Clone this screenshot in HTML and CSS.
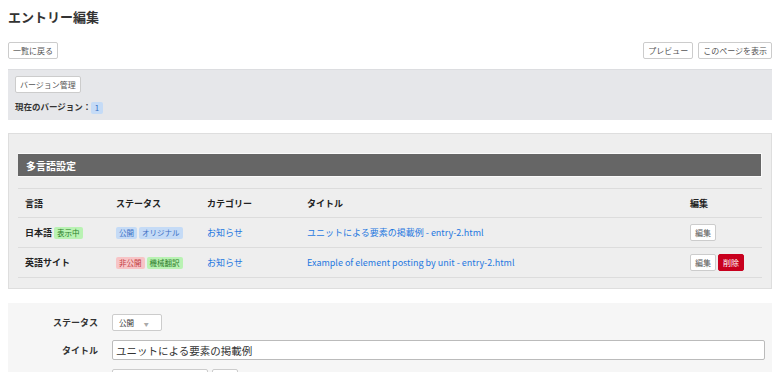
FILE: index.html
```html
<!DOCTYPE html>
<html lang="ja">
<head>
  <meta charset="UTF-8">
  <meta name="viewport" content="width=device-width, initial-scale=1.0">
  <title>エントリー編集</title>
  <link rel="stylesheet" href="styles.css">
</head>
<body>
  <h1 class="page-title">エントリー編集</h1>

  <div class="toolbar">
    <button class="btn">一覧に戻る</button>
    <div class="toolbar-right">
      <button class="btn">プレビュー</button>
      <button class="btn">このページを表示</button>
    </div>
  </div>

  <div class="version-box">
    <button class="btn">バージョン管理</button>
    <div class="version-current">現在のバージョン：<span class="badge badge-blue">1</span></div>
  </div>

  <div class="panel">
    <h2 class="panel-title">多言語設定</h2>
    <table class="lang-table">
      <thead>
        <tr>
          <th class="col-lang">言語</th>
          <th class="col-status">ステータス</th>
          <th class="col-cat">カテゴリー</th>
          <th class="col-title">タイトル</th>
          <th class="col-edit">編集</th>
        </tr>
      </thead>
      <tbody>
        <tr>
          <td class="lang-name">日本語 <span class="badge badge-green">表示中</span></td>
          <td><span class="badge badge-blue">公開</span> <span class="badge badge-blue">オリジナル</span></td>
          <td><a href="#">お知らせ</a></td>
          <td><a href="#">ユニットによる要素の掲載例 - entry-2.html</a></td>
          <td><button class="btn">編集</button></td>
        </tr>
        <tr>
          <td class="lang-name">英語サイト</td>
          <td><span class="badge badge-red">非公開</span> <span class="badge badge-green">機械翻訳</span></td>
          <td><a href="#">お知らせ</a></td>
          <td><a href="#">Example of element posting by unit - entry-2.html</a></td>
          <td><button class="btn">編集</button> <button class="btn btn-danger">削除</button></td>
        </tr>
      </tbody>
    </table>
  </div>

  <div class="entry-form">
    <div class="form-row">
      <div class="form-label">ステータス</div>
      <div class="select">公開 <span class="select-arrow">▼</span></div>
    </div>
    <div class="form-row">
      <div class="form-label">タイトル</div>
      <input class="text-input" type="text" value="ユニットによる要素の掲載例">
    </div>
    <div class="form-row">
      <div class="form-label"></div>
      <div class="small-box wide"></div>
      <div class="small-box"></div>
    </div>
  </div>
</body>
</html>
```

FILE: styles.css
```css
* {
  margin: 0;
  padding: 0;
  box-sizing: border-box;
}

body {
  font-family: "Noto Sans CJK JP", "Noto Sans", sans-serif;
  color: #333;
  background: #fff;
  padding: 0 8px;
  font-size: 9px;
}

.page-title {
  font-size: 13px;
  font-weight: bold;
  line-height: 18px;
  margin-top: 8px;
  color: #333;
}

.btn {
  font-family: inherit;
  font-size: 8px;
  line-height: 15px;
  height: 17px;
  padding: 0 4px;
  background: #fff;
  color: #555;
  border: 1px solid #ccc;
  border-radius: 2px;
}

.btn-danger {
  background: #c8001e;
  border-color: #c8001e;
  color: #fff;
}

.toolbar {
  display: flex;
  justify-content: space-between;
  margin-top: 16px;
}

.toolbar-right {
  display: flex;
  gap: 5px;
}

.version-box {
  margin-top: 10px;
  background: #e6e7ea;
  border-top: 1px solid #dcdde0;
  padding: 6px 7px 8px;
  height: 51px;
}

.version-current {
  margin-top: 7px;
  font-weight: bold;
  font-size: 8.5px;
  line-height: 12px;
}

.badge {
  display: inline-block;
  font-size: 7.5px;
  line-height: 12px;
  padding: 0 3px;
  border-radius: 2px;
  font-weight: normal;
  vertical-align: middle;
}

.version-current .badge {
  font-size: 8px;
  padding: 0 3.5px;
}

.badge-blue {
  background: #c5dbf6;
  color: #3a6fc4;
}

.badge-green {
  background: #b9f2b3;
  color: #2c7d2a;
}

.badge-red {
  background: #f7c4c6;
  color: #c23a3f;
}

.panel {
  margin-top: 13px;
  background: #eeeeee;
  border: 1px solid #dedede;
  padding: 19px 9px 10px;
}

.panel-title {
  background: #666;
  color: #fff;
  font-size: 10px;
  font-weight: bold;
  line-height: 24px;
  height: 24px;
  padding-left: 8px;
  border: 1px solid #fafafa;
  border-width: 1px 1px 1px 0;
}

.lang-table {
  width: 100%;
  margin-top: 11px;
  border-collapse: collapse;
}

.lang-table th,
.lang-table td {
  text-align: left;
  padding: 0 0 0 7px;
  border-top: 1px solid #dcdcdc;
  height: 30px;
  white-space: nowrap;
}

.lang-table tbody tr:last-child td {
  border-bottom: 1px solid #dcdcdc;
}

.lang-table th {
  font-size: 9px;
  font-weight: bold;
  color: #222;
  height: 29px;
  padding-top: 1px;
}

.col-lang { width: 91px; }
.col-status { width: 91px; }
.col-cat { width: 100px; }
.col-edit { width: 79px; }

.lang-name {
  font-weight: bold;
  color: #222;
  font-size: 9px;
}

.lang-table a {
  color: #1f78e0;
  text-decoration: none;
  font-size: 9px;
}

.entry-form {
  margin-top: 14px;
  background: #f6f6f6;
  padding: 11px 7px 0 0;
  height: 80px;
}

.form-row {
  display: flex;
  align-items: center;
  gap: 14px;
  margin-bottom: 9px;
}

.form-label {
  width: 90px;
  text-align: right;
  font-weight: bold;
  font-size: 9px;
  color: #333;
  flex-shrink: 0;
}

.select {
  width: 50px;
  height: 17px;
  line-height: 15px;
  background: #fff;
  border: 1px solid #ccc;
  border-radius: 2px;
  font-size: 7.5px;
  padding-left: 6px;
  color: #333;
}

.select-arrow {
  color: #aaa;
  font-size: 5px;
  margin-left: 8px;
}

.text-input {
  flex: 1;
  height: 20px;
  border: 1px solid #bbb;
  border-radius: 2px;
  font-family: inherit;
  font-size: 10.5px;
  padding: 0 3px;
  color: #333;
  background: #fff;
}

.form-row .small-box {
  height: 20px;
  width: 26px;
  background: #fff;
  border: 1px solid #ccc;
  border-radius: 2px;
  margin-left: -10px;
}

.form-row .small-box.wide {
  width: 96px;
  margin-left: 0;
}
```
